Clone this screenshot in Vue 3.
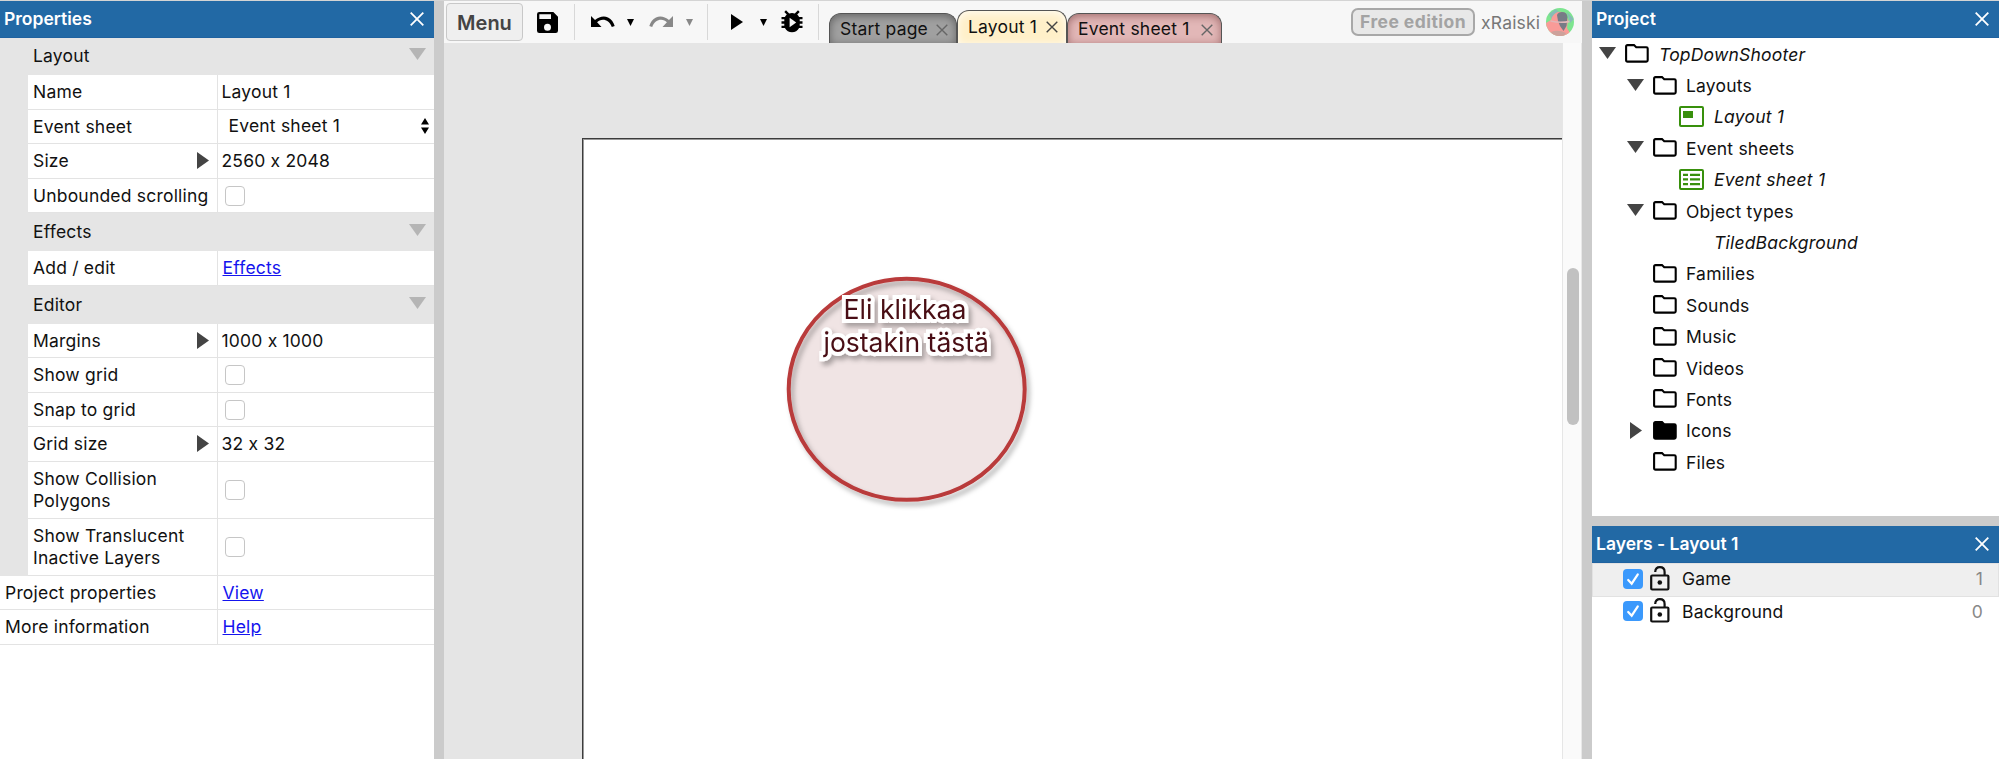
<script setup>
const groups = [
  {
    title: 'Layout',
    rows: [
      { name: 'Name', value: 'Layout 1' },
      { name: 'Event sheet', select: 'Event sheet 1' },
      { name: 'Size', value: '2560 x 2048', expand: true },
      { name: 'Unbounded scrolling', check: true },
    ],
  },
  { title: 'Effects', rows: [{ name: 'Add / edit', link: 'Effects' }] },
  {
    title: 'Editor',
    rows: [
      { name: 'Margins', value: '1000 x 1000', expand: true },
      { name: 'Show grid', check: true },
      { name: 'Snap to grid', check: true },
      { name: 'Grid size', value: '32 x 32', expand: true },
      { name: 'Show Collision Polygons', check: true, tall: true },
      { name: 'Show Translucent Inactive Layers', check: true, tall: true },
    ],
  },
]
const footer = [
  { name: 'Project properties', link: 'View' },
  { name: 'More information', link: 'Help' },
]
const tree = [
  { label: 'TopDownShooter', level: 0, arrow: 'down', icon: 'folder', italic: true },
  { label: 'Layouts', level: 1, arrow: 'down', icon: 'folder' },
  { label: 'Layout 1', level: 2, icon: 'layout', italic: true },
  { label: 'Event sheets', level: 1, arrow: 'down', icon: 'folder' },
  { label: 'Event sheet 1', level: 2, icon: 'sheet', italic: true },
  { label: 'Object types', level: 1, arrow: 'down', icon: 'folder' },
  { label: 'TiledBackground', level: 2, icon: 'none', italic: true },
  { label: 'Families', level: 1, icon: 'folder' },
  { label: 'Sounds', level: 1, icon: 'folder' },
  { label: 'Music', level: 1, icon: 'folder' },
  { label: 'Videos', level: 1, icon: 'folder' },
  { label: 'Fonts', level: 1, icon: 'folder' },
  { label: 'Icons', level: 1, arrow: 'right', icon: 'filled' },
  { label: 'Files', level: 1, icon: 'folder' },
]
const layers = [
  { label: 'Game', index: 1, selected: true },
  { label: 'Background', index: 0 },
]
const tabs = [
  { label: 'Start page', kind: 'start' },
  { label: 'Layout 1', kind: 'layout' },
  { label: 'Event sheet 1', kind: 'sheet' },
]
</script>

<template>
  <div class="app">
    <aside class="properties">
      <header class="bar">
        <span>Properties</span>
        <svg class="close" viewBox="0 0 14 14"><path d="M.7 .7 13.3 13.3M13.3 .7 .7 13.3" /></svg>
      </header>
      <section v-for="g in groups" :key="g.title" class="group">
        <div class="group-head">
          <span>{{ g.title }}</span>
          <svg class="fold" viewBox="0 0 17 12"><path d="M0 0H17L8.5 12Z" /></svg>
        </div>
        <div v-for="r in g.rows" :key="r.name" class="row" :class="{ tall: r.tall }">
          <div class="name">
            <span>{{ r.name }}</span>
            <svg v-if="r.expand" class="expand" viewBox="0 0 12 17"><path d="M0 0 12 8.5 0 17Z" /></svg>
          </div>
          <div class="value">
            <span v-if="r.value">{{ r.value }}</span>
            <template v-if="r.select">
              <span class="selected-value">{{ r.select }}</span>
              <svg class="updown" viewBox="0 0 8 16"><path d="M4 0 8 6.5H0ZM0 9.500H8L4 16Z" /></svg>
            </template>
            <a v-if="r.link">{{ r.link }}</a>
            <i v-if="r.check" class="checkbox"></i>
          </div>
        </div>
      </section>
      <div v-for="r in footer" :key="r.name" class="row wide">
        <div class="name"><span>{{ r.name }}</span></div>
        <div class="value"><a>{{ r.link }}</a></div>
      </div>
    </aside>
    <div class="splitter"></div>
    <main class="main">
      <nav class="toolbar">
        <div class="menu">Menu</div>
        <svg class="save" viewBox="3 3 18 18"><path d="M17 3H5a2 2 0 0 0-2 2v14a2 2 0 0 0 2 2h14a2 2 0 0 0 2-2V7ZM12 19a3 3 0 1 1 0-6 3 3 0 0 1 0 6ZM15 9H5V5h10Z" /></svg>
        <i class="sep s1"></i>
        <svg class="undo" viewBox="0 0 24 12"><path d="M0 0 4 4C8 .8 13-.6 17 1.600 20.500 3.500 22.700 6.500 23.700 10L20.800 11C19 6 15.500 3.800 12 3.800 9.500 3.800 7.600 4.800 6.100 6.200L10.500 11H0Z" /></svg>
        <svg class="caret" viewBox="0 0 7 7"><path d="M0 0H7L3.500 7Z" /></svg>
        <svg class="redo" viewBox="0 0 24 12"><path d="M24 0 20 4C16 .8 11-.6 7 1.600 3.500 3.500 1.300 6.500 .3 10L3.200 11C5 6 8.500 3.800 12 3.800 14.500 3.800 16.400 4.800 17.900 6.200L13.500 11H24Z" /></svg>
        <svg class="caret dim" viewBox="0 0 7 7"><path d="M0 0H7L3.500 7Z" /></svg>
        <i class="sep s2"></i>
        <svg class="play" viewBox="0 0 12 16"><path d="M0 0 12 8 0 16Z" /></svg>
        <svg class="caret after-play" viewBox="0 0 7 7"><path d="M0 0H7L3.500 7Z" /></svg>
        <svg class="bug" viewBox="0 0 22 23">
          <path d="M5 .2 8.200 3.500Q11 2.500 13.800 3.500L17 .2 18.700 1.900 16.200 4.400Q17.500 5.600 18.100 7H21.500V9.300H18.700V11.300H21.500V13.700H18.700V15.700H21.500V18H18.100C15.500 23.700 6.500 23.700 3.900 18H.5V15.700H3.300V13.700H.5V11.300H3.300V9.300H.5V7H3.900Q4.500 5.600 5.800 4.400L3.300 1.900Z" />
          <path class="hole" d="M8.600 7.800 15.200 12.400 8.600 17.200Z" />
        </svg>
        <i class="sep s3"></i>
        <div class="tabs">
          <div v-for="t in tabs" :key="t.label" class="tab" :class="t.kind">
            <span>{{ t.label }}</span>
            <svg class="tab-close" viewBox="0 0 12 12"><path d="M.7 .7 11.300 11.300M11.300 .7 .7 11.300" /></svg>
          </div>
        </div>
        <div class="account">
          <span class="edition">Free edition</span>
          <span class="user">xRaiski</span>
          <svg class="avatar" viewBox="0 0 28 28">
            <defs><clipPath id="avatar-clip"><circle cx="14" cy="14" r="14" /></clipPath></defs>
            <g clip-path="url(#avatar-clip)">
              <rect width="28" height="28" fill="#7de58f" />
              <path d="M3 6 10 1 14 5 6 12ZM21 4 28 11 24 15Z" fill="#86bdb5" />
              <path d="M0 15 5 12 6 9Q10 3 16 4L19 5 22 12 21 20 24 25 20 28H6L0 22Z" fill="#f99b98" />
              <path d="M5 24Q12 21 20 25L18 28H8Z" fill="#cda19b" />
              <path d="M11 7Q12 4 16 4 21 4 21.500 9L20.500 18 17.500 23 14 18 12 13Z" fill="#777b86" />
              <path d="M4.500 12.200Q14 14.500 23.500 12.500V14.500Q14 16 4.500 13.800Z" fill="#e0b8ba" />
            </g>
          </svg>
        </div>
      </nav>
      <div class="workspace">
        <div class="viewport">
          <div class="page"></div>
          <svg class="callout" viewBox="0 0 260 245">
            <defs>
              <filter id="soft" x="-10%" y="-10%" width="125%" height="125%">
                <feDropShadow dx="3" dy="4" stdDeviation="2.5" flood-color="#000" flood-opacity=".3" />
              </filter>
            </defs>
            <ellipse cx="126.700" cy="119.300" rx="118" ry="110.500" fill="#f0e4e4" />
            <ellipse cx="126.700" cy="119.300" rx="118" ry="110.500" fill="none" stroke="#b93a3b" stroke-width="4" filter="url(#soft)" />
            <g filter="url(#soft)" class="callout-text">
              <text x="63.500" y="49" textLength="123" lengthAdjust="spacingAndGlyphs">Eli klikkaa</text>
              <text x="43.500" y="82" textLength="165.500" lengthAdjust="spacingAndGlyphs">jostakin tästä</text>
            </g>
          </svg>
        </div>
        <div class="scroll"><div class="thumb"></div></div>
      </div>
    </main>
    <div class="splitter"></div>
    <aside class="right">
      <header class="bar">
        <span>Project</span>
        <svg class="close" viewBox="0 0 14 14"><path d="M.7 .7 13.3 13.3M13.3 .7 .7 13.3" /></svg>
      </header>
      <div class="tree">
        <div v-for="n in tree" :key="n.label" class="node" :class="['level' + n.level, { italic: n.italic }]">
          <span class="arrow">
            <svg v-if="n.arrow === 'down'" width="17" height="12" viewBox="0 0 17 12"><path d="M0 0H17L8.500 12Z" /></svg>
            <svg v-if="n.arrow === 'right'" class="closed" width="12" height="17" viewBox="0 0 12 17"><path d="M0 0 12 8.500 0 17Z" /></svg>
          </span>
          <svg v-if="n.icon === 'folder' || n.icon === 'filled'" class="folder" :class="{ filled: n.icon === 'filled' }" viewBox="0 0 24 19">
            <path d="M1.100 2.500Q1.100 1.100 2.500 1.100H9L11.200 3.200H21.300Q22.700 3.200 22.700 4.600V16.200Q22.700 17.600 21.300 17.600H2.500Q1.100 17.600 1.100 16.200Z" />
          </svg>
          <svg v-else class="item" viewBox="0 0 25 21">
            <template v-if="n.icon !== 'none'">
              <rect x="1" y="1" width="23" height="19" rx="1" class="frame" />
              <rect v-if="n.icon === 'layout'" x="4" y="5" width="10" height="7" />
              <path v-else d="M4 4.700H9V7H4ZM11 4.700H21V7H11ZM4 9.300H9V11.600H4ZM11 9.300H21V11.600H11ZM4 14H9V16.300H4ZM11 14H21V16.300H11Z" />
            </template>
          </svg>
          <span class="label">{{ n.label }}</span>
        </div>
      </div>
      <div class="hsplit"></div>
      <header class="bar">
        <span>Layers - Layout 1</span>
        <svg class="close" viewBox="0 0 14 14"><path d="M.7 .7 13.3 13.3M13.3 .7 .7 13.3" /></svg>
      </header>
      <div class="layers">
        <div v-for="l in layers" :key="l.label" class="layer" :class="{ selected: l.selected }">
          <svg class="tick" viewBox="0 0 20 20"><rect width="20" height="20" rx="4" /><path d="M5.200 11 8.700 14.700 14.800 5.300" /></svg>
          <svg class="lock" viewBox="0 0 20 25"><rect x="1.200" y="9.500" width="17.200" height="14" rx="1" /><path d="M5.200 6Q5.500 1.200 9.800 1.200 14.600 1.200 14.600 6V9.500" /><circle cx="9.800" cy="16.500" r="2.300" /></svg>
          <span class="label">{{ l.label }}</span>
          <span class="index">{{ l.index }}</span>
        </div>
      </div>
    </aside>
  </div>
</template>

<style>
html, body { overflow: hidden; }
</style>

<style scoped>
.app { display: flex; box-sizing: border-box; width: 1999px; height: 759px; padding-top: 1px; background: #d4d4d4; overflow: hidden; font: 17.5px/22px Inter, "Liberation Sans", sans-serif; font-feature-settings: "calt" 0; letter-spacing: .2px; color: #111; }
svg { display: block; flex: none; }
.properties { width: 434px; background: #fff; flex: none; }
.bar { display: flex; align-items: center; justify-content: space-between; box-sizing: border-box; height: 36.500px; padding: 0 10px 0 4px; background: #2269a5; border-bottom: 1px solid #1f62a0; color: #fff; font-weight: 600; letter-spacing: 0; }
.close { width: 14px; height: 14px; fill: none; stroke: #fff; stroke-width: 1.8; }
.group { padding-left: 28px; background: #e5e5e5; }
.group-head { display: flex; align-items: center; justify-content: space-between; height: 38px; padding: 0 8px 0 5px; box-sizing: border-box; }
.group:nth-of-type(1) .group-head { height: 37.500px; }
.fold { width: 17px; height: 12px; fill: #b5b5b5; margin-top: -4px; }
.row { display: flex; height: 34.500px; box-sizing: border-box; border-bottom: 1px solid #e3e3e3; background: #fff; }
.row.tall { height: 57px; }
.name { width: 189.500px; flex: none; box-sizing: border-box; border-right: 1px solid #e3e3e3; padding: 1px 8px 0 5px; display: flex; align-items: center; justify-content: space-between; }
.wide .name { width: 217.500px; }
.name span { white-space: nowrap; }
.tall .name span { white-space: normal; }
.expand { width: 12px; height: 17px; fill: #444; margin-top: -1px; }
.value { flex: 1; display: flex; align-items: center; padding: 1px 5px 0 4px; }
.selected-value { flex: 1; margin: -2px 0 0 7px; }
.updown { width: 8px; height: 16px; margin-top: -1px; }
.value a { color: #1414ee; text-decoration: underline; margin-left: 1px; }
.checkbox { width: 18px; height: 18px; border: 1px solid #c6c6c6; border-radius: 4px; margin-left: 3px; background: #fff; }
.splitter { width: 10px; flex: none; background: #cbcbcb; }
.main { width: 1138px; flex: none; display: flex; flex-direction: column; }
.toolbar { height: 42px; flex: none; background: #f7f7f7; display: flex; align-items: center; }
.menu { box-sizing: border-box; width: 77px; height: 38.500px; margin-left: 2px; border: 1px solid #c8c8c8; border-radius: 4px; background: #efefef; color: #444; font-weight: 600; font-size: 20px; line-height: 39px; text-align: center; letter-spacing: 0; }
.save { width: 21px; height: 21px; margin-left: 14px; }
.sep { width: 1px; height: 36px; background: #d8d8d8; flex: none; }
.s1 { margin-left: 16px; }
.s2 { margin-left: 14px; }
.s3 { margin-left: 15px; }
.undo, .redo { width: 24px; height: 12px; }
.undo { margin-left: 16px; }
.redo { margin-left: 15px; fill: #888; }
.caret { width: 7px; height: 7px; margin-left: 12px; }
.caret.dim { fill: #888; margin-left: 13px; }
.play { width: 12px; height: 16px; margin-left: 23px; }
.after-play { margin-left: 17px; }
.bug { width: 22px; height: 23px; margin-left: 14px; margin-top: -2px; }
.hole { fill: #f7f7f7; }
.tabs { display: flex; align-self: stretch; align-items: flex-end; margin-left: 10px; }
.tab { box-sizing: border-box; height: 30px; border: 1px solid #555; border-bottom: 0; border-radius: 12px 12px 0 0; display: flex; align-items: center; justify-content: space-between; padding: 1px 8px 0 10px; }
.start { width: 128px; background: #a0a0a0; box-shadow: inset 0 2px 9px rgba(0,0,0,.38); }
.layout { width: 110px; height: 33px; padding-top: 0; padding-bottom: 1px; background: #fff0c9; box-shadow: inset 0 2px 9px rgba(255,255,255,.8); }
.layout .tab-close { stroke: #444; }
.tab.sheet { width: 155px; background: #e2b7b7; box-shadow: inset 0 2px 9px rgba(90,30,30,.48); }
.tab-close { width: 12px; height: 12px; fill: none; stroke: #666; stroke-width: 1.4; margin-top: 1px; }
.account { margin-left: auto; display: flex; align-items: center; padding-right: 8px; color: #777; }
.edition { box-sizing: border-box; width: 124px; height: 28px; border: 2px solid #a8a8a8; border-radius: 7px; background: #e8e8e8; color: #a3a3a3; font-weight: 700; line-height: 24px; text-align: center; letter-spacing: .45px; white-space: nowrap; }
.user { width: 59px; margin: 1px 6px 0; }
.avatar { width: 28px; height: 28px; }
.workspace { flex: 1; display: flex; }
.viewport { width: 1117.500px; position: relative; background: #e5e5e5; overflow: hidden; }
.page { position: absolute; left: 138px; top: 95px; right: 0; bottom: 0; border: solid #3c3c3c; border-width: 1px 0 0 1px; background: #fff; box-shadow: inset 1px 1px 0 #999; }
.callout { position: absolute; left: 336px; top: 227px; width: 260px; height: 245px; overflow: visible; }
.callout-text text { font-size: 27.500px; letter-spacing: 0; fill: #4a1114; stroke: #fff; stroke-width: 8px; paint-order: stroke; stroke-linejoin: miter; stroke-miterlimit: 2; }
.scroll { flex: 1; background: #fafafa; border-left: 1px solid #e6e6e6; border-right: 1px solid #e8e8e8; padding: 225px 0 0 4px; box-sizing: border-box; }
.thumb { width: 12px; height: 157px; border-radius: 6px; background: #c1c1c1; }
.right { width: 407px; flex: none; background: #fff; display: flex; flex-direction: column; }
.tree { height: 478.500px; padding-top: 1.500px; box-sizing: border-box; }
.node { height: 31.400px; display: flex; align-items: center; padding-left: 7px; }
.level1 { padding-left: 35px; }
.level2 { padding-left: 62px; }
.arrow { width: 17px; fill: #444; }
.arrow svg { margin-top: -3px; }
.arrow svg.closed { margin: -2px 0 0 3px; }
.folder { width: 24px; height: 19px; margin-left: 8.500px; margin-top: -2px; fill: none; stroke: #000; stroke-width: 2.100; }
.level0 .folder { margin-left: 9px; }
.folder.filled { fill: #000; }
.item { width: 25px; height: 21px; margin-left: 8px; margin-top: -2px; fill: #38900c; }
.frame { fill: none; stroke: #38900c; stroke-width: 2; }
.node .label { margin-left: 9.500px; }
.level0 .label { margin-left: 10px; }
.level2 .label { margin-left: 10px; }
.italic { font-style: italic; }
.hsplit { height: 10px; background: #cbcbcb; flex: none; }
.layer { height: 29.500px; box-sizing: border-box; display: flex; align-items: center; padding: 0 16px 0 31px; }
.layer.selected { height: 34.500px; background: #efefef; border: 1px solid #e2e2e2; padding: 0 15px 1px 30px; }
.tick { width: 20px; height: 20px; margin-top: -1px; fill: #3b99fc; }
.tick path { fill: none; stroke: #fff; stroke-width: 2.200; stroke-linecap: round; }
.lock { width: 20px; height: 25px; margin-left: 7px; margin-top: -2px; fill: none; stroke: #111; stroke-width: 2.200; }
.lock circle { fill: #111; stroke: none; }
.layer .label { flex: 1; margin-left: 12px; }
.index { color: #888; }
</style>
